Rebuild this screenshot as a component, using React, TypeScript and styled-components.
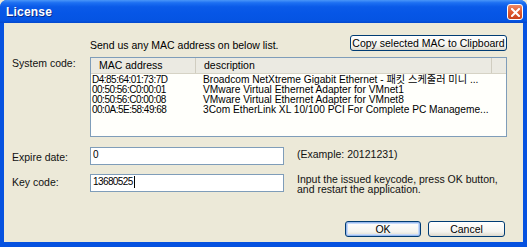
import React from "react";
import styled, { createGlobalStyle } from "styled-components";

const GlobalStyle = createGlobalStyle`
  html, body {
    margin: 0;
    padding: 0;
    background: #ece9d8;
  }
  body {
    font-family: "Liberation Sans", Arial, "Noto Sans CJK KR", sans-serif;
    font-size: 10.5px;
    line-height: 12px;
    color: #000;
  }
`;

const macs = [
  { mac: "D4:85:64:01:73:7D", desc: "Broadcom NetXtreme Gigabit Ethernet - 패킷 스케줄러 미니 ..." },
  { mac: "00:50:56:C0:00:01", desc: "VMware Virtual Ethernet Adapter for VMnet1" },
  { mac: "00:50:56:C0:00:08", desc: "VMware Virtual Ethernet Adapter for VMnet8" },
  { mac: "00:0A:5E:58:49:68", desc: "3Com EtherLink XL 10/100 PCI For Complete PC Manageme..." },
];

const App: React.FC = () => {
  return (
    <>
      <GlobalStyle />
      <Window>
        <TitleBar>
          <Title>License</Title>
          <CloseBox>
            <svg width="9" height="9" viewBox="0 0 9 9">
              <path d="M1 1 L8 8 M8 1 L1 8" stroke="#fff" strokeWidth="2" strokeLinecap="square" />
            </svg>
          </CloseBox>
        </TitleBar>
        <Client>
          <TopRow>
            <Hint>Send us any MAC address on below list.</Hint>
            <Button $w={157}>Copy selected MAC to Clipboard</Button>
          </TopRow>

          <FieldRow $mt={6}>
            <Label $pt={0}>System code:</Label>
            <ListBox>
              <Header>
                <HeadCell $w={105}>MAC address</HeadCell>
                <HeadCell $w={296}>description</HeadCell>
                <HeadCell $w={14} />
              </Header>
              <Rows>
                {macs.map((m) => (
                  <Row key={m.mac}>
                    <MacCell>{m.mac}</MacCell>
                    <DescCell>{m.desc}</DescCell>
                  </Row>
                ))}
              </Rows>
            </ListBox>
          </FieldRow>

          <FieldRow $mt={10}>
            <Label $pt={4}>Expire date:</Label>
            <TextBox>0</TextBox>
            <Note $pt={2}>(Example: 20121231)</Note>
          </FieldRow>

          <FieldRow $mt={9}>
            <Label $pt={2}>Key code:</Label>
            <TextBox>
              13680525
              <Caret />
            </TextBox>
            <Note $pt={0}>
              Input the issued keycode, press OK button,
              <br />
              and restart the application.
            </Note>
          </FieldRow>

          <Footer>
            <Button $w={76} $default>OK</Button>
            <Button $w={77}>Cancel</Button>
          </Footer>
        </Client>
      </Window>
    </>
  );
};

export default App;

const Window = styled.div`
  width: 527px;
  height: 247px;
  display: flex;
  flex-direction: column;
  background: #0652e0;
  border-radius: 7px 7px 0 0;
  overflow: hidden;
`;

const TitleBar = styled.div`
  height: 23px;
  flex: none;
  display: flex;
  align-items: center;
  justify-content: space-between;
  padding: 0 4px 0 6px;
  background: linear-gradient(
    to bottom,
    #4a96f8 0%,
    #1d70f2 12%,
    #0a5ae8 30%,
    #0656e6 60%,
    #0554e2 90%,
    #0448cc 100%
  );
`;

const Title = styled.span`
  color: #fff;
  font-weight: bold;
  font-size: 12px;
  letter-spacing: 0.2px;
  text-shadow: 1px 1px 0 #0a2a8a;
  margin-top: 1px;
`;

const CloseBox = styled.div`
  width: 14px;
  height: 14px;
  display: flex;
  align-items: center;
  justify-content: center;
  border: 1px solid #fff;
  border-radius: 3px;
  background: linear-gradient(to bottom, #ee8a66, #e05a30 50%, #c9411c);
  margin-top: 1px;
`;

const Client = styled.div`
  flex: 1;
  margin: 0 4px 5px 4px;
  background: #ece9d8;
  padding: 14px 16px 0 8px;
  display: flex;
  flex-direction: column;
`;

const TopRow = styled.div`
  display: flex;
  align-items: flex-end;
  justify-content: space-between;
  padding-left: 78px;
  height: 14px;
`;

const Hint = styled.span`
  line-height: 12px;
`;

const Button = styled.div<{ $w: number; $default?: boolean }>`
  width: ${(p) => p.$w}px;
  height: 16px;
  flex: none;
  box-sizing: border-box;
  display: flex;
  align-items: center;
  justify-content: center;
  border: 1px solid #003c74;
  border-radius: 3px;
  background: linear-gradient(to bottom, #ffffff, #f4f3ee 70%, #dcd8cc);
  box-shadow: ${(p) => (p.$default ? "inset 0 0 0 1px #98b8ec, inset 0 0 0 2px #c6dafa" : "none")};
  color: #000;
  white-space: nowrap;
`;

const FieldRow = styled.div<{ $mt: number }>`
  display: flex;
  align-items: flex-start;
  margin-top: ${(p) => p.$mt}px;
`;

const Label = styled.div<{ $pt: number }>`
  width: 78px;
  flex: none;
  padding-top: ${(p) => p.$pt}px;
  color: #111;
`;

const ListBox = styled.div`
  width: 417px;
  height: 80px;
  box-sizing: border-box;
  border: 1px solid #7f9db9;
  background: #fffffb;
  display: flex;
  flex-direction: column;
`;

const Header = styled.div`
  height: 15px;
  flex: none;
  display: flex;
  background: #ebeae2;
  border-bottom: 1px solid #d6d3c5;
`;

const HeadCell = styled.div<{ $w: number }>`
  width: ${(p) => p.$w}px;
  flex: none;
  box-sizing: border-box;
  padding-left: 8px;
  line-height: 15px;
  border-right: 1px solid #d0cdc0;
  &:last-child {
    border-right: none;
  }
`;

const Rows = styled.div`
  padding-top: 1px;
  display: flex;
  flex-direction: column;
`;

const Row = styled.div`
  display: flex;
  height: 10px;
  line-height: 10px;
`;

const MacCell = styled.div`
  width: 111px;
  flex: none;
  padding-left: 1px;
  font-size: 10px;
  letter-spacing: -0.5px;
`;

const DescCell = styled.div`
  font-size: 10.2px;
  white-space: nowrap;
`;

const TextBox = styled.div`
  width: 194px;
  height: 18px;
  flex: none;
  box-sizing: border-box;
  border: 1px solid #7f9db9;
  background: #fff;
  padding: 1px 2px;
  font-size: 10px;
  letter-spacing: -0.6px;
  line-height: 12px;
  display: flex;
  align-items: flex-start;
`;

const Caret = styled.span`
  width: 1px;
  height: 12px;
  background: #000;
  margin-left: 1px;
`;

const Note = styled.div<{ $pt: number }>`
  margin-left: 13px;
  padding-top: ${(p) => p.$pt}px;
  line-height: 10px;
  white-space: nowrap;
  color: #111;
`;

const Footer = styled.div`
  display: flex;
  justify-content: flex-end;
  gap: 7px;
  margin-top: 27px;
  padding-right: 2px;
`;
